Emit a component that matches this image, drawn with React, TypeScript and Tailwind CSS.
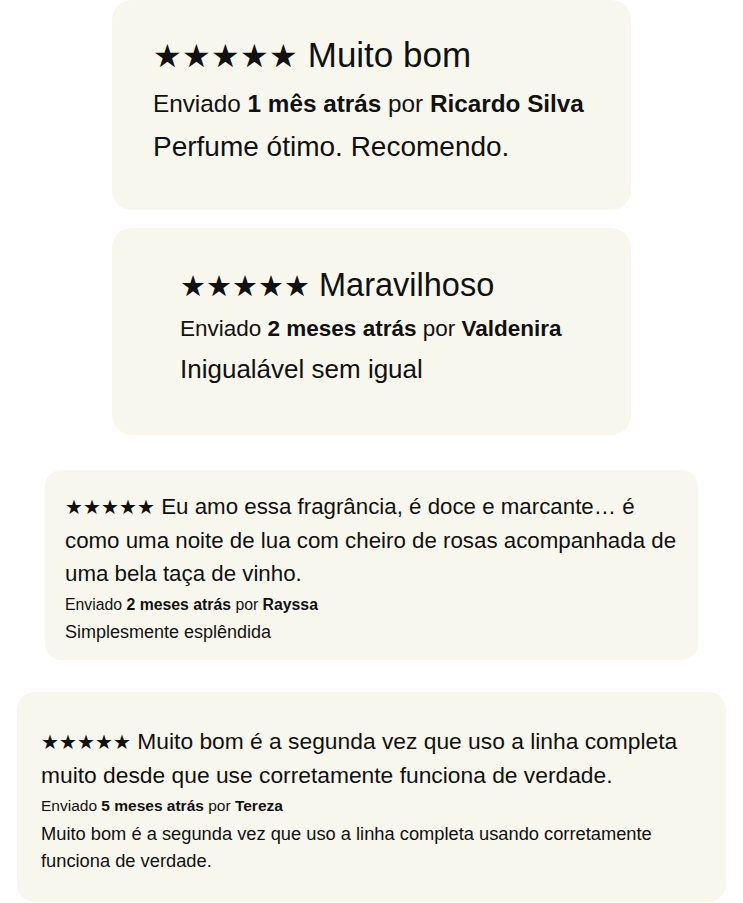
import React from "react";

const font = { fontFamily: '"Liberation Sans", Arial, sans-serif' };

export default function App() {
  return (
    <div className="w-[743px] min-h-[903px] bg-white text-[#111] flex flex-col items-center" style={font}>
      <div className="w-[519px] h-[210px] bg-[#f8f7ee] rounded-[20px] pl-[41px] pt-[33px]">
        <div className="text-[35px] leading-[44px] whitespace-nowrap">
          <span className="text-[31.5px]">★★★★★</span> Muito bom
        </div>
        <div className="text-[24.3px] leading-[52px] whitespace-nowrap">
          Enviado <b>1 mês atrás</b> por <b>Ricardo Silva</b>
        </div>
        <div className="text-[28px] leading-[34px] whitespace-nowrap">Perfume ótimo. Recomendo.</div>
      </div>

      <div className="mt-[18px] w-[519px] h-[207px] bg-[#f8f7ee] rounded-[20px] pl-[68px] pt-[35px]">
        <div className="text-[32.5px] leading-[44px] whitespace-nowrap">
          <span className="text-[29px]">★★★★★</span> Maravilhoso
        </div>
        <div className="text-[22.5px] leading-[42px] whitespace-nowrap">
          Enviado <b>2 meses atrás</b> por <b>Valdenira</b>
        </div>
        <div className="text-[26px] leading-[38px] whitespace-nowrap">Inigualável sem igual</div>
      </div>

      <div className="mt-[35px] w-[653px] h-[190px] bg-[#f8f7ee] rounded-[16px] pl-[20px] pr-[10px] pt-[20px]">
        <div className="text-[22.3px] leading-[33px]">
          <span className="text-[20px]">★★★★★</span> Eu amo essa fragrância, é doce e marcante… é como uma noite de lua com cheiro de rosas acompanhada de uma bela taça de vinho.
        </div>
        <div className="text-[15.8px] leading-[30px]">
          Enviado <b>2 meses atrás</b> por <b>Rayssa</b>
        </div>
        <div className="text-[18px] leading-[24px]">Simplesmente esplêndida</div>
      </div>

      <div className="mt-[32px] w-[709px] h-[210px] bg-[#f8f7ee] rounded-[18px] pl-[24px] pr-[20px] pt-[33px]">
        <div className="text-[22.8px] leading-[33px]">
          <span className="text-[20px]">★★★★★</span> Muito bom é a segunda vez que uso a linha completa muito desde que use corretamente funciona de verdade.
        </div>
        <div className="text-[15.5px] leading-[28px]">
          Enviado <b>5 meses atrás</b> por <b>Tereza</b>
        </div>
        <div className="text-[18.3px] leading-[27px]">
          Muito bom é a segunda vez que uso a linha completa usando corretamente funciona de verdade.
        </div>
      </div>
    </div>
  );
}
